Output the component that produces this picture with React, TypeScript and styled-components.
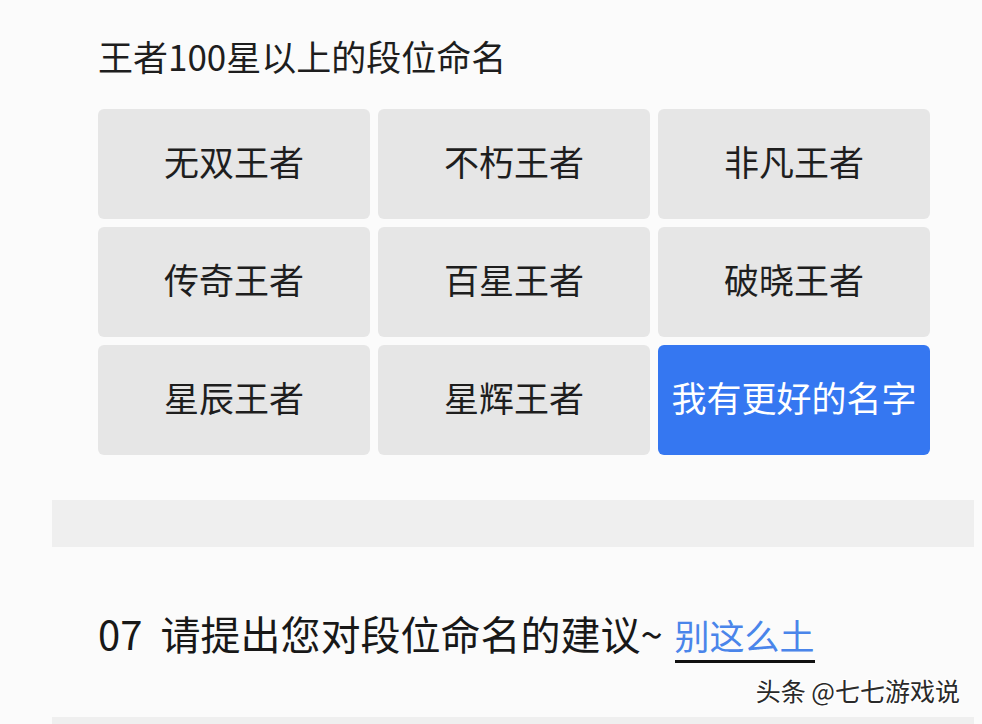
import React from "react";
import styled, { createGlobalStyle } from "styled-components";

const GlobalStyle = createGlobalStyle`
  html, body {
    margin: 0;
    padding: 0;
    background: #fbfbfb;
    font-family: "Noto Sans CJK SC", "Noto Sans", sans-serif;
  }
`;

const Page = styled.div`
  position: relative;
  width: 982px;
  height: 724px;
  overflow: hidden;
  padding: 0 8px 0 52px;
  box-sizing: border-box;
  background: #fbfbfb;
`;

const Section = styled.section`
  padding: 26px 0 0 46px;
`;

const Title = styled.h2`
  margin: 0 0 23px;
  font-size: 35px;
  line-height: 60px;
  font-weight: 400;
  color: #1e1e1e;
`;

const Grid = styled.div`
  display: grid;
  grid-template-columns: repeat(3, 272px);
  grid-auto-rows: 110px;
  gap: 8px;
`;

const Option = styled.div<{ $active?: boolean }>`
  display: flex;
  align-items: center;
  justify-content: center;
  padding-bottom: 8px;
  box-sizing: border-box;
  border-radius: 6px;
  background: ${(p) => (p.$active ? "#3577f1" : "#e6e6e6")};
  color: ${(p) => (p.$active ? "#ffffff" : "#1e1e1e")};
  font-size: 35px;
  font-weight: 400;
  line-height: 1;
`;

const Band = styled.div<{ $h: number; $mt: number }>`
  height: ${(p) => p.$h}px;
  margin-top: ${(p) => p.$mt}px;
  background: #efefef;
`;

const Question = styled.p`
  margin: 61px 0 0 46px;
  font-size: 40px;
  font-weight: 400;
  line-height: 50px;
  color: #181818;
  white-space: nowrap;
`;

const Num = styled.span`
  margin-right: 18px;
`;

const Link = styled.span`
  display: inline-block;
  margin-left: 12px;
  font-size: 35px;
  font-weight: 400;
  color: #4a85ea;
  border-bottom: 3px solid #111;
  line-height: 44px;
  padding-bottom: 3px;
`;

const Watermark = styled.div`
  position: absolute;
  right: 22px;
  top: 670px;
  font-size: 25px;
  line-height: 40px;
  color: #2a2a2a;
  text-shadow: 1px 1px 0 #fff, -1px -1px 0 #fff, 1px -1px 0 #fff, -1px 1px 0 #fff;
`;

const names = [
  "无双王者",
  "不朽王者",
  "非凡王者",
  "传奇王者",
  "百星王者",
  "破晓王者",
  "星辰王者",
  "星辉王者",
];

export default function App() {
  return (
    <>
      <GlobalStyle />
      <Page>
        <Section>
          <Title>王者100星以上的段位命名</Title>
          <Grid>
            {names.map((n) => (
              <Option key={n}>{n}</Option>
            ))}
            <Option $active>我有更好的名字</Option>
          </Grid>
        </Section>
        <Band $h={47} $mt={45} />
        <Question>
          <Num>07</Num>请提出您对段位命名的建议~<Link>别这么土</Link>
        </Question>
        <Band $h={20} $mt={54} />
        <Watermark>头条 @七七游戏说</Watermark>
      </Page>
    </>
  );
}
